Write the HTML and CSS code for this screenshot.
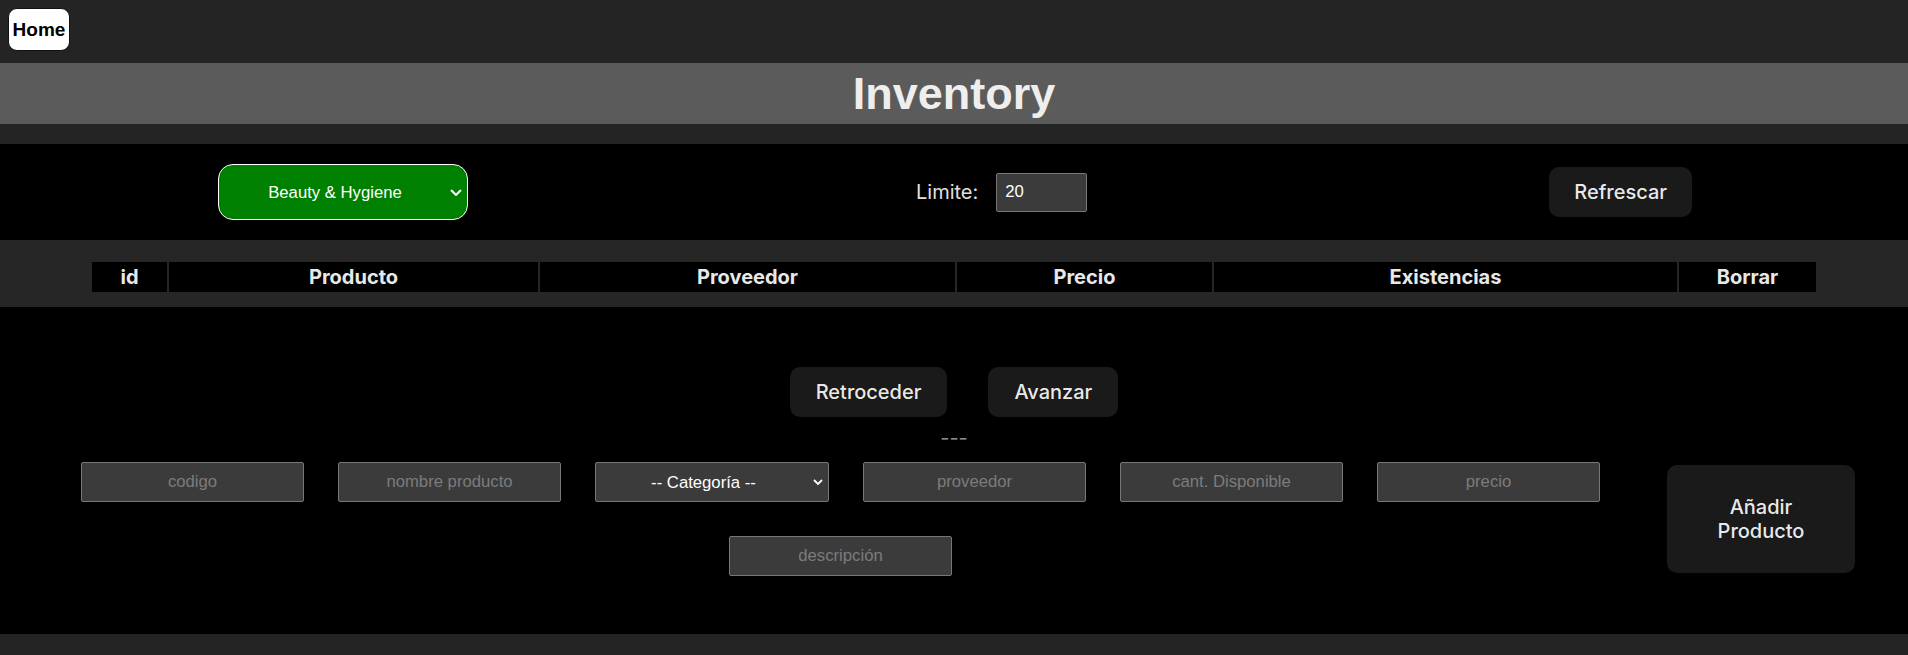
FILE: index.html
```html
<!DOCTYPE html>
<html lang="es">
<head>
<meta charset="utf-8">
<title>Inventory</title>
<link rel="stylesheet" href="styles.css">
</head>
<body>
<header class="topbar">
  <button class="home-btn">Home</button>
</header>
<h1 class="title">Inventory</h1>
<div class="spacer"></div>
<main class="main">
  <section class="controls">
    <div class="select-wrap green-wrap">
      <select class="cat-select">
        <option>Beauty &amp; Hygiene</option>
      </select>
      <svg class="chev chev-lg" viewBox="0 0 12 7" width="12" height="7"><path d="M1 1l5 5 5-5" fill="none" stroke="#fff" stroke-width="2"/></svg>
    </div>
    <div class="limit">
      <label class="limit-label">Limite:</label>
      <input class="limit-input" type="text" value="20">
    </div>
    <button class="btn refresh">Refrescar</button>
  </section>
  <section class="table-band">
    <table class="inv-table">
      <colgroup>
        <col class="c-id"><col class="c-prod"><col class="c-prov"><col class="c-price"><col class="c-stock"><col class="c-del">
      </colgroup>
      <thead>
        <tr>
          <th>id</th><th>Producto</th><th>Proveedor</th><th>Precio</th><th>Existencias</th><th>Borrar</th>
        </tr>
      </thead>
    </table>
  </section>
  <section class="lower">
    <div class="pager">
      <button class="btn">Retroceder</button>
      <button class="btn">Avanzar</button>
    </div>
    <p class="dashes">---</p>
    <div class="add-row">
      <div class="fields">
        <input class="field" type="text" placeholder="codigo">
        <input class="field" type="text" placeholder="nombre producto">
        <div class="select-wrap cat-wrap">
          <select class="field-select">
            <option>-- Categoría --</option>
          </select>
          <svg class="chev chev-sm" viewBox="0 0 10 7" width="10" height="7"><path d="M1 1l4 4 4-4" fill="none" stroke="#fff" stroke-width="1.8"/></svg>
        </div>
        <input class="field" type="text" placeholder="proveedor">
        <input class="field" type="text" placeholder="cant. Disponible">
        <input class="field" type="text" placeholder="precio">
        <input class="field" type="text" placeholder="descripción">
      </div>
      <button class="btn add-btn">Añadir Producto</button>
    </div>
  </section>
</main>
</body>
</html>
```

FILE: styles.css
```css
html, body {
  margin: 0;
  padding: 0;
}
body {
  background: #242424;
  font-family: "Inter", "Liberation Sans", Arial, sans-serif;
  color: rgba(255, 255, 255, 0.87);
  height: 655px;
  overflow: hidden;
}
.topbar {
  height: 63px;
  box-sizing: border-box;
  padding: 8px;
}
.home-btn {
  width: 62px;
  height: 43px;
  box-sizing: border-box;
  background: #fff;
  color: #000;
  border: 1px solid #111;
  border-radius: 9px;
  font-family: "Liberation Sans", Arial, sans-serif;
  font-weight: bold;
  font-size: 19px;
  padding: 0;
  cursor: pointer;
}
.title {
  margin: 0;
  height: 61px;
  line-height: 61px;
  background: #5b5b5b;
  text-align: center;
  font-family: "Liberation Sans", Arial, sans-serif;
  font-weight: bold;
  font-size: 45px;
  color: #eeeeee;
}
.spacer {
  height: 20px;
}
.main {
  background: #000;
}
.controls {
  height: 96px;
  display: flex;
  align-items: center;
  padding-left: 218px;
}
.select-wrap {
  position: relative;
  flex: none;
}
.chev {
  position: absolute;
  pointer-events: none;
}
.green-wrap {
  width: 250px;
  height: 56px;
}
.cat-select {
  appearance: none;
  -webkit-appearance: none;
  width: 250px;
  height: 56px;
  box-sizing: border-box;
  background: #008000;
  color: #fff;
  border: 1px solid #fff;
  border-radius: 15px;
  font-family: "Liberation Sans", Arial, sans-serif;
  font-size: 16.7px;
  text-align: center;
  text-align-last: center;
  padding: 0 16px 0 0;
  outline: none;
}
.chev-lg {
  right: 6px;
  top: 25px;
}
.limit {
  display: flex;
  align-items: center;
  margin-left: 448px;
  gap: 18px;
}
.limit-label {
  font-size: 20px;
  color: #e0e0e0;
}
.limit-input {
  width: 91px;
  height: 39px;
  box-sizing: border-box;
  background: #3b3b3b;
  border: 1px solid #777;
  border-radius: 2px;
  color: #fff;
  font-family: "Liberation Sans", Arial, sans-serif;
  font-size: 16.7px;
  padding: 0 8px;
  outline: none;
}
.btn {
  font-family: "Inter", sans-serif;
  font-size: 20px;
  font-weight: 500;
  line-height: 1.21;
  padding: 12px 24px;
  border: 1px solid transparent;
  border-radius: 10px;
  background: #1a1a1a;
  color: rgba(255, 255, 255, 0.92);
  cursor: pointer;
}
.refresh {
  margin-left: 462px;
}
.table-band {
  background: #262626;
  height: 67px;
  box-sizing: border-box;
  padding-top: 22px;
}
.inv-table {
  width: 1728px;
  margin: -2px auto 0;
  border-collapse: separate;
  border-spacing: 2px;
  table-layout: fixed;
}
.c-id { width: 75px; }
.c-prod { width: 369px; }
.c-prov { width: 415px; }
.c-price { width: 255px; }
.c-stock { width: 463px; }
.c-del { width: 137px; }
.inv-table th {
  background: #000;
  height: 30px;
  padding: 0;
  font-size: 20px;
  font-weight: bold;
  line-height: 30px;
  color: #e8e8e8;
  text-align: center;
}
.lower {
  padding: 60px 0 41px;
}
.pager {
  display: flex;
  justify-content: center;
  gap: 41px;
}
.pager .btn {
  padding: 12px 25px;
}
.dashes {
  margin: 0;
  height: 28px;
  box-sizing: border-box;
  padding-top: 13px;
  line-height: 16px;
  font-size: 20px;
  color: #8a8a8a;
  text-align: center;
}
.add-row {
  display: flex;
  align-items: center;
  padding-left: 64px;
  gap: 50px;
}
.fields {
  width: 1553px;
  flex: none;
  box-sizing: border-box;
  padding: 17px 0;
  display: flex;
  flex-wrap: wrap;
  justify-content: center;
  gap: 34px;
}
.field {
  width: 223px;
  height: 40px;
  box-sizing: border-box;
  background: #3b3b3b;
  border: 1px solid #777;
  border-radius: 2px;
  color: #fff;
  font-family: "Liberation Sans", Arial, sans-serif;
  font-size: 16.7px;
  text-align: center;
  outline: none;
}
.field::placeholder {
  color: #7b7b7b;
}
.cat-wrap {
  width: 234px;
  height: 40px;
}
.field-select {
  appearance: none;
  -webkit-appearance: none;
  width: 234px;
  height: 40px;
  box-sizing: border-box;
  background: #3b3b3b;
  border: 1px solid #777;
  border-radius: 2px;
  color: #fff;
  font-family: "Liberation Sans", Arial, sans-serif;
  font-size: 16.7px;
  text-align: center;
  text-align-last: center;
  padding: 0 17px 0 0;
  outline: none;
}
.chev-sm {
  right: 6px;
  top: 17px;
}
.add-btn {
  width: 188px;
  height: 108px;
  box-sizing: border-box;
  flex: none;
  padding: 0 24px;
}
```
